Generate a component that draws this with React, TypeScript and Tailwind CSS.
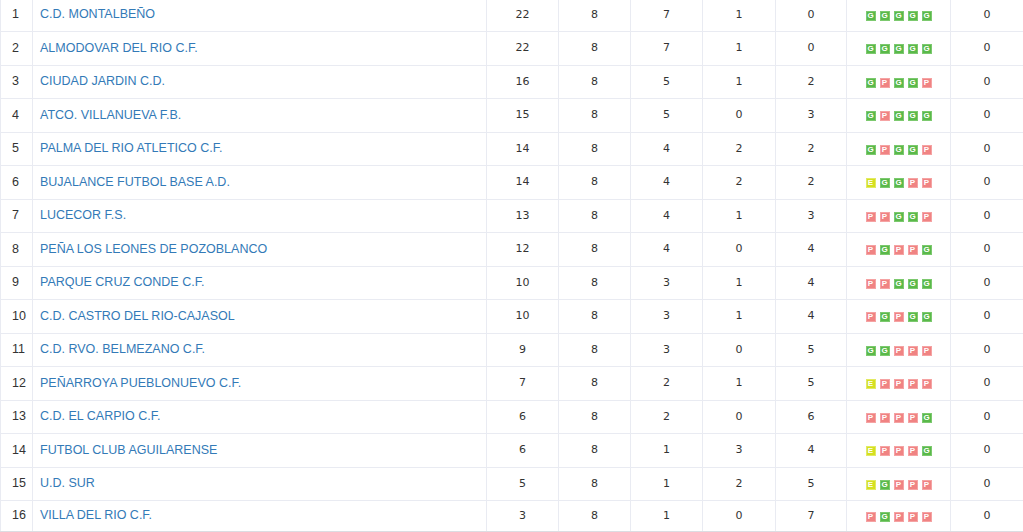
import React from 'react';

type Team = {
  pos: number;
  name: string;
  pts: number;
  pj: number;
  g: number;
  e: number;
  p: number;
  form: string;
  sanc: number;
};

const teams: Team[] = [
  { pos: 1, name: 'C.D. MONTALBEÑO', pts: 22, pj: 8, g: 7, e: 1, p: 0, form: 'GGGGG', sanc: 0 },
  { pos: 2, name: 'ALMODOVAR DEL RIO C.F.', pts: 22, pj: 8, g: 7, e: 1, p: 0, form: 'GGGGG', sanc: 0 },
  { pos: 3, name: 'CIUDAD JARDIN C.D.', pts: 16, pj: 8, g: 5, e: 1, p: 2, form: 'GPGGP', sanc: 0 },
  { pos: 4, name: 'ATCO. VILLANUEVA F.B.', pts: 15, pj: 8, g: 5, e: 0, p: 3, form: 'GPGGG', sanc: 0 },
  { pos: 5, name: 'PALMA DEL RIO ATLETICO C.F.', pts: 14, pj: 8, g: 4, e: 2, p: 2, form: 'GPGGP', sanc: 0 },
  { pos: 6, name: 'BUJALANCE FUTBOL BASE A.D.', pts: 14, pj: 8, g: 4, e: 2, p: 2, form: 'EGGPP', sanc: 0 },
  { pos: 7, name: 'LUCECOR F.S.', pts: 13, pj: 8, g: 4, e: 1, p: 3, form: 'PPGGP', sanc: 0 },
  { pos: 8, name: 'PEÑA LOS LEONES DE POZOBLANCO', pts: 12, pj: 8, g: 4, e: 0, p: 4, form: 'PGPPG', sanc: 0 },
  { pos: 9, name: 'PARQUE CRUZ CONDE C.F.', pts: 10, pj: 8, g: 3, e: 1, p: 4, form: 'PPGGG', sanc: 0 },
  { pos: 10, name: 'C.D. CASTRO DEL RIO-CAJASOL', pts: 10, pj: 8, g: 3, e: 1, p: 4, form: 'PGPGG', sanc: 0 },
  { pos: 11, name: 'C.D. RVO. BELMEZANO C.F.', pts: 9, pj: 8, g: 3, e: 0, p: 5, form: 'GGPPP', sanc: 0 },
  { pos: 12, name: 'PEÑARROYA PUEBLONUEVO C.F.', pts: 7, pj: 8, g: 2, e: 1, p: 5, form: 'EPPPP', sanc: 0 },
  { pos: 13, name: 'C.D. EL CARPIO C.F.', pts: 6, pj: 8, g: 2, e: 0, p: 6, form: 'PPPPG', sanc: 0 },
  { pos: 14, name: 'FUTBOL CLUB AGUILARENSE', pts: 6, pj: 8, g: 1, e: 3, p: 4, form: 'EPPPG', sanc: 0 },
  { pos: 15, name: 'U.D. SUR', pts: 5, pj: 8, g: 1, e: 2, p: 5, form: 'EGPPP', sanc: 0 },
  { pos: 16, name: 'VILLA DEL RIO C.F.', pts: 3, pj: 8, g: 1, e: 0, p: 7, form: 'PGPPP', sanc: 0 },
];

const badgeColor: Record<string, string> = {
  G: 'bg-[#5ab94a] border-[#7cc96e]',
  P: 'bg-[#f08383] border-[#f5a3a3]',
  E: 'bg-[#d5e020] border-[#e2ea63]',
};

const Badge = ({ r }: { r: string }) => (
  <span
    className={`flex h-[10px] w-[10px] items-center justify-center border text-[8px] font-bold leading-none text-white ${badgeColor[r]}`}
  >
    {r}
  </span>
);

const cell = 'flex items-center justify-center border-r border-[#e9ebf2]';
const stat = `${cell} font-['DejaVu_Sans',sans-serif] text-[11px] text-[#333]`;

export default function App() {
  return (
    <div className="h-[532px] w-[1023px] overflow-hidden bg-white font-['Liberation_Sans',Arial,sans-serif]">
      <div className="-mt-[1.5px] border-b-2 border-[#dcdde2]">
        {teams.map((t, i) => (
          <div
            key={t.pos}
            className={`grid grid-cols-[32px_454px_72px_72px_72px_73px_71px_104px_1fr] border-l border-[#e9ebf2] ${
              i === teams.length - 1 ? 'h-[29.5px]' : 'h-[33.5px] border-b'
            }`}
          >
            <div className="flex items-center border-r border-[#e9ebf2] pl-[11px] text-[12.5px] text-[#333]">
              {t.pos}
            </div>
            <div className="flex items-center border-r border-[#e9ebf2] pl-[7px]">
              <a href="#" className="text-[12.5px] text-[#337ab7]">
                {t.name}
              </a>
            </div>
            <div className={stat}>{t.pts}</div>
            <div className={stat}>{t.pj}</div>
            <div className={stat}>{t.g}</div>
            <div className={stat}>{t.e}</div>
            <div className={stat}>{t.p}</div>
            <div className="flex items-center justify-center gap-[4px] border-r border-[#e9ebf2] pt-[2px]">
              {t.form.split('').map((r, j) => (
                <Badge key={j} r={r} />
              ))}
            </div>
            <div className="flex items-center justify-center font-['DejaVu_Sans',sans-serif] text-[11px] text-[#333]">
              {t.sanc}
            </div>
          </div>
        ))}
      </div>
    </div>
  );
}
